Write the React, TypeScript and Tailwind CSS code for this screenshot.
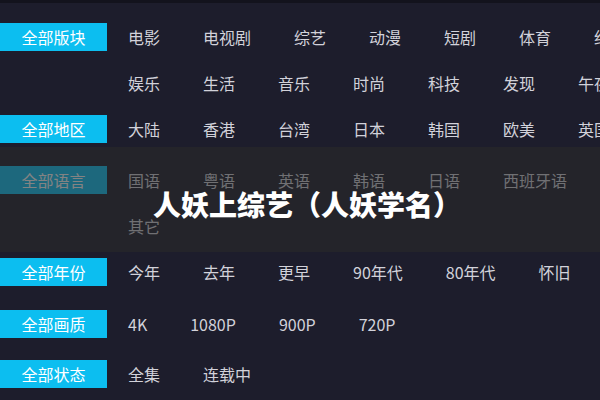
import React from "react";

type Group = { label: string; items: string[]; mt: string };

const groups: Group[] = [
  {
    label: "全部版块",
    items: ["电影", "电视剧", "综艺", "动漫", "短剧", "体育", "纪录", "娱乐", "生活", "音乐", "时尚", "科技", "发现", "午夜"],
    mt: "mt-0",
  },
  { label: "全部地区", items: ["大陆", "香港", "台湾", "日本", "韩国", "欧美", "英国"], mt: "mt-0" },
  { label: "全部语言", items: ["国语", "粤语", "英语", "韩语", "日语", "西班牙语", "其它"], mt: "mt-[5px]" },
  { label: "全部年份", items: ["今年", "去年", "更早", "90年代", "80年代", "怀旧"], mt: "mt-0" },
  { label: "全部画质", items: ["4K", "1080P", "900P", "720P"], mt: "mt-[6px]" },
  { label: "全部状态", items: ["全集", "连载中"], mt: "mt-[4px]" },
];

export default function App() {
  return (
    <div
      className="relative w-[600px] h-[400px] overflow-hidden bg-[#1d1d2c]"
      style={{ fontFamily: '"Noto Sans CJK SC", "Noto Sans", sans-serif' }}
    >
      <div className="h-[3px] bg-[#13131d]" />
      <div className="pt-[11px] flex flex-col">
        {groups.map((g) => (
          <div key={g.label} className={`flex items-start ${g.mt}`}>
            <div className="mt-[9px] w-[107px] h-[28px] shrink-0 bg-[#0cbef0] text-white text-[16px] flex items-center justify-center">
              {g.label}
            </div>
            <div className="ml-[21px] w-[507px] shrink-0 flex flex-wrap gap-x-[43px]">
              {g.items.map((it) => (
                <div key={it} className="h-[46px] flex items-center text-[16px] text-[#d2d2da] whitespace-nowrap">
                  {it}
                </div>
              ))}
            </div>
          </div>
        ))}
      </div>
      <div className="absolute left-0 right-0 top-[147px] h-[105px] bg-[rgba(42,42,42,0.58)] flex items-center justify-center pt-[9px] pl-[14px]">
        <span className="text-white text-[28px] font-black">人妖上综艺（人妖学名）</span>
      </div>
    </div>
  );
}
